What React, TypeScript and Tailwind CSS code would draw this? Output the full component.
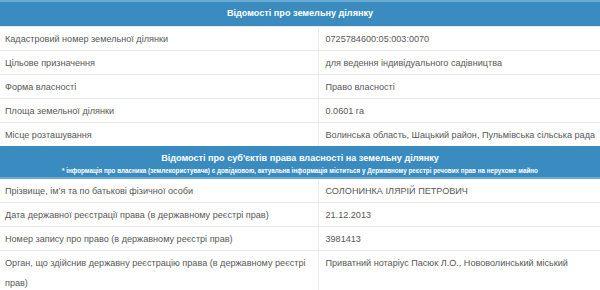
const land: [string, string][] = [
  ['Кадастровий номер земельної ділянки', '0725784600:05:003:0070'],
  ['Цільове призначення', 'для ведення індивідуального садівництва'],
  ['Форма власності', 'Право власності'],
  ['Площа земельної ділянки', '0.0601 га'],
  ['Місце розташування', 'Волинська область, Шацький район, Пульмівська сільська рада'],
];

const owners: [string, string][] = [
  ['Прізвище, ім’я та по батькові фізичної особи', 'СОЛОНИНКА ІЛЯРІЙ ПЕТРОВИЧ'],
  ['Дата державної реєстрації права (в державному реєстрі прав)', '21.12.2013'],
  ['Номер запису про право (в державному реєстрі прав)', '3981413'],
  ['Орган, що здійснив державну реєстрацію права (в державному реєстрі прав)', 'Приватний нотаріус Пасюк Л.О., Нововолинський міський'],
];

function Row({ label, value }: { label: string; value: string }) {
  return (
    <tr className="border-t border-[#e8e8e8]">
      <td className="align-top px-[5px] pt-[2px] pb-[1px] leading-[20px] border-r border-[#ececec]">{label}</td>
      <td className="align-top px-[7px] pt-[2px] pb-[1px] leading-[20px] whitespace-nowrap">{value}</td>
    </tr>
  );
}

export default function App() {
  return (
    <div className="w-[600px] h-[290px] overflow-hidden bg-white text-[9.1px] text-[#585858] font-['Liberation_Sans',Arial,sans-serif]">
      <table className="w-full border-collapse table-fixed">
        <colgroup>
          <col className="w-[318px]" />
          <col />
        </colgroup>
        <tbody>
          <tr>
            <td colSpan={2} className="h-[25px] bg-[#3a8cc0] border-t-2 border-[#6aaad3] text-center text-white font-bold">
              Відомості про земельну ділянку
            </td>
          </tr>
          {land.map(([l, v]) => <Row key={l} label={l} value={v} />)}
          <tr>
            <td colSpan={2} className="h-[32px] bg-[#3a8cc0] border-b-2 border-[#6aaad3] text-center text-white font-bold pt-[5px] pb-0">
              <div className="leading-[13px]">Відомості про суб'єктів права власності на земельну ділянку</div>
              <div className="text-[6.3px] leading-[11px]">* інформація про власника (землекористувача) є довідковою, актуальна інформація міститься у Державному реєстрі речових прав на нерухоме майно</div>
            </td>
          </tr>
          {owners.map(([l, v]) => <Row key={l} label={l} value={v} />)}
        </tbody>
      </table>
    </div>
  );
}
